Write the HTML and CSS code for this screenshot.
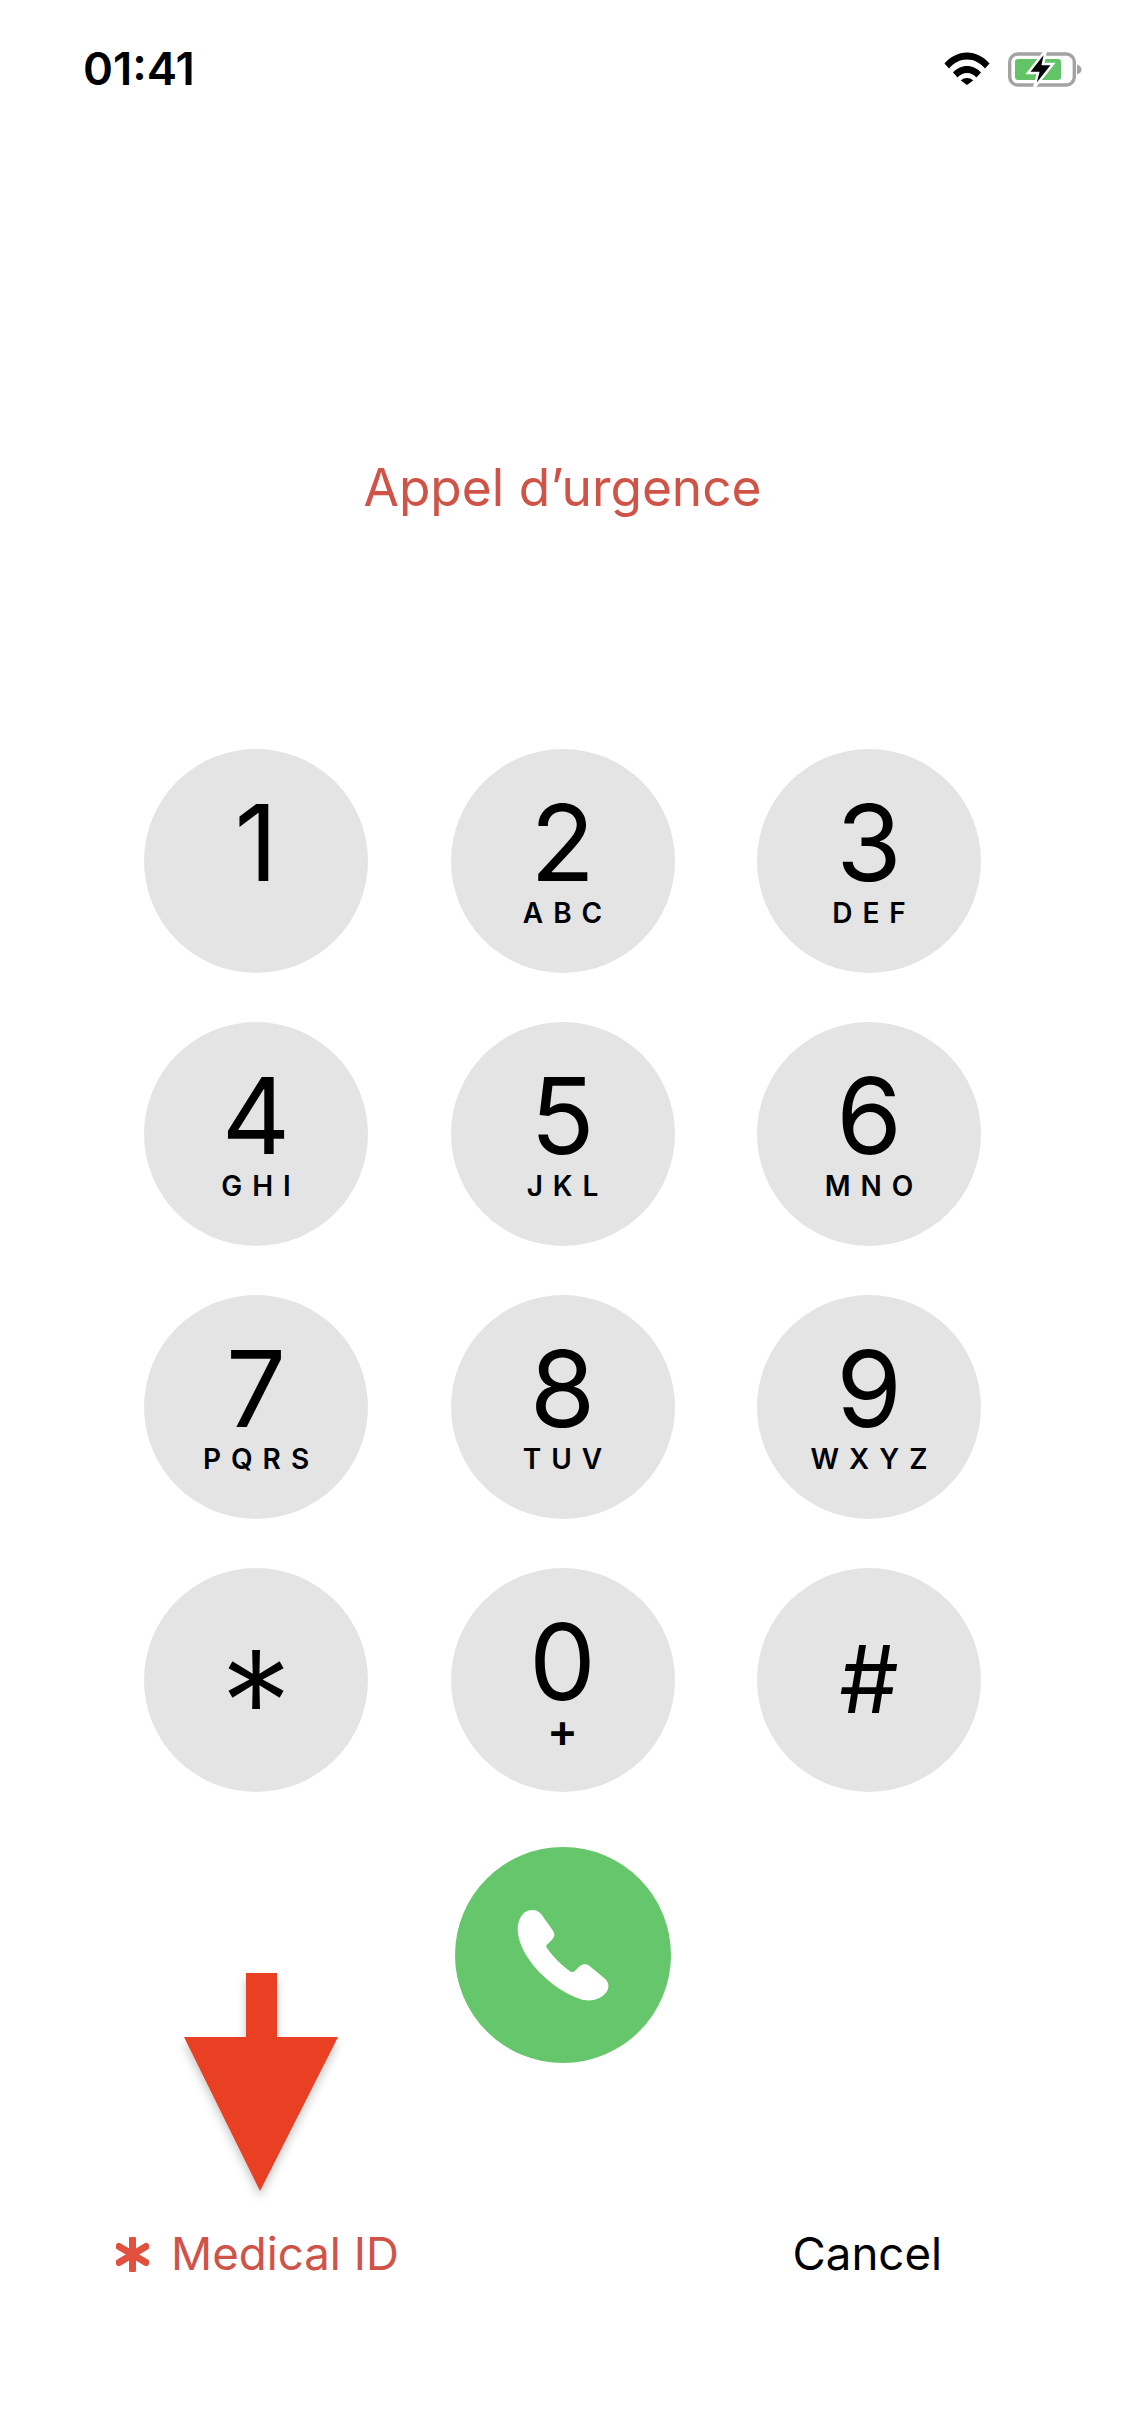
FILE: index.html
```html
<!DOCTYPE html>
<html lang="fr">
<head>
<meta charset="utf-8">
<title>Appel d'urgence</title>
<link rel="stylesheet" href="styles.css">
</head>
<body>
<main class="screen">
  <header class="status">
    <span class="time">01:41</span>
    <div class="status-icons">
      <svg class="wifi" viewBox="0 0 46 33" aria-hidden="true">
        <path d="M0.5 11.5C6.5 4.6 14.4 0.5 23 0.5s16.500 4.100 22.500 11L41 16.500C36.300 11 30 7.600 23 7.600S9.700 11 5 16.500Z"/>
        <path d="M9 20.500C12.700 16.400 17.600 14 23 14s10.300 2.400 14 6.500l-4.600 5C29.900 22.600 26.600 21 23 21s-6.900 1.600-9.400 4.500Z"/>
        <path d="M16.800 28.500C18.400 26.800 20.600 26 23 26s4.600 0.800 6.200 2.500L23 33Z"/>
      </svg>
      <svg class="battery" viewBox="0 0 74 36" aria-hidden="true">
        <rect x="1.700" y="3" width="64.600" height="31" rx="8" fill="none" stroke="#a3a3a3" stroke-width="3.400"/>
        <rect x="7" y="8" width="46" height="21" rx="3" fill="#62c466"/>
        <path d="M69 13.500c3 1 4.500 3 4.500 5s-1.500 4-4.500 5Z" fill="#a3a3a3"/>
        <path d="M38 -1L20 22h10L26 37 45 13H35Z" fill="#000" stroke="#fff" stroke-width="2.500" stroke-linejoin="miter"/>
      </svg>
    </div>
  </header>

  <h1 class="title">Appel d’urgence</h1>

  <section class="keypad">
    <button class="key"><span class="digit">1</span></button>
    <button class="key"><span class="digit">2</span><span class="letters">ABC</span></button>
    <button class="key"><span class="digit">3</span><span class="letters">DEF</span></button>
    <button class="key"><span class="digit">4</span><span class="letters">GHI</span></button>
    <button class="key"><span class="digit">5</span><span class="letters">JKL</span></button>
    <button class="key"><span class="digit">6</span><span class="letters">MNO</span></button>
    <button class="key"><span class="digit">7</span><span class="letters">PQRS</span></button>
    <button class="key"><span class="digit">8</span><span class="letters">TUV</span></button>
    <button class="key"><span class="digit">9</span><span class="letters">WXYZ</span></button>
    <button class="key key-star"><span class="star">*</span></button>
    <button class="key"><span class="digit">0</span><span class="plus">+</span></button>
    <button class="key key-hash"><span class="hash">#</span></button>
  </section>

  <button class="call" aria-label="Appeler">
    <svg class="call-icon" viewBox="75 80 648 648" aria-hidden="true">
      <path d="M284 276C300 265 322 266 334 282L368 330C376 342 374 350 366 358L350 374C347 378 350 382 353 386C368 408 395 435 422 454C428 457 433 455 438 448L450 437C458 430 468 430 476 435L525 475C538 487 539 504 527 518C510 538 480 546 450 536C380 512 296 442 270 365C258 330 261 296 284 276Z"/>
    </svg>
  </button>

  <footer class="actions">
    <span class="medical">
      <svg class="medical-star" viewBox="0 0 33 35" aria-hidden="true">
        <path d="M16.500 2V33M3 9.500L30 25.500M30 9.500L3 25.500"/>
      </svg>
      <span>Medical ID</span>
    </span>
    <span class="cancel">Cancel</span>
  </footer>

  <svg class="arrow" viewBox="0 0 154 218" aria-hidden="true">
    <path d="M62 0H93V64H154L76 218L0 64H62Z"/>
  </svg>
</main>
</body>
</html>
```

FILE: styles.css
```css
* {
  box-sizing: border-box;
}

html,
body {
  margin: 0;
  padding: 0;
  background: #fff;
}

.screen {
  position: relative;
  width: 1125px;
  height: 2436px;
  overflow: hidden;
  display: flex;
  flex-direction: column;
  font-family: Inter, "Liberation Sans", sans-serif;
  color: #000;
  background: #fff;
}

.status {
  display: flex;
  justify-content: space-between;
  align-items: center;
  height: 34px;
  margin-top: 52px;
  padding: 0 43px 0 83px;
}

.time {
  font-size: 45.5px;
  font-weight: 600;
  line-height: 34px;
}

.status-icons {
  display: flex;
  align-items: flex-start;
  gap: 18px;
}

.wifi {
  display: block;
  width: 46px;
  height: 33px;
  fill: #000;
}

.battery {
  display: block;
  width: 74px;
  height: 36px;
  margin-top: -1px;
}

.title {
  margin: 371px 0 0;
  font-size: 51.4px;
  font-weight: 400;
  line-height: 60px;
  text-align: center;
  color: #cf5347;
}

.keypad {
  display: grid;
  grid-template-columns: repeat(3, 224px);
  grid-auto-rows: 224px;
  column-gap: 82.5px;
  row-gap: 49px;
  justify-content: center;
  margin-top: 232px;
}

.key {
  display: flex;
  flex-direction: column;
  align-items: center;
  width: 224px;
  height: 224px;
  padding: 41px 0 0;
  border: 0;
  border-radius: 50%;
  background: #e4e4e4;
  color: #000;
  font-family: inherit;
}

.digit {
  display: block;
  height: 106px;
  font-size: 106px;
  font-weight: 400;
  line-height: 106px;
}

.letters {
  display: block;
  margin-top: 3px;
  margin-right: -10px;
  font-size: 28px;
  font-weight: 600;
  line-height: 28px;
  letter-spacing: 10px;
}

.plus {
  display: block;
  font-size: 46px;
  font-weight: 600;
  line-height: 30px;
}

.key-star {
  padding-top: 60px;
}

.key-hash {
  padding-top: 64px;
}

.star {
  display: block;
  height: 104px;
  font-size: 144px;
  font-weight: 300;
  line-height: 150px;
}

.hash {
  display: block;
  font-size: 94px;
  font-weight: 400;
  line-height: 94px;
}

.call {
  align-self: center;
  width: 216px;
  height: 216px;
  margin-top: 55px;
  padding: 0;
  border: 0;
  border-radius: 50%;
  background: #66c66b;
}

.call-icon {
  display: block;
  width: 216px;
  height: 216px;
  fill: #fff;
}

.actions {
  display: grid;
  grid-template-columns: 1fr 1fr;
  align-items: center;
  margin-top: 163px;
  padding: 0 0 0 116px;
  font-size: 45.6px;
  line-height: 56px;
}

.medical {
  display: flex;
  align-items: center;
  gap: 22px;
  color: #cf5347;
}

.medical-star {
  display: block;
  width: 33px;
  height: 35px;
  fill: none;
  stroke: #e2513f;
  stroke-width: 7px;
  stroke-linecap: round;
}

.cancel {
  justify-self: end;
  margin-right: 183px;
}

.arrow {
  position: absolute;
  left: 184px;
  top: 1973px;
  width: 154px;
  height: 218px;
  fill: #e93f22;
  filter: drop-shadow(0 6px 5px rgba(0, 0, 0, 0.22));
}
```
